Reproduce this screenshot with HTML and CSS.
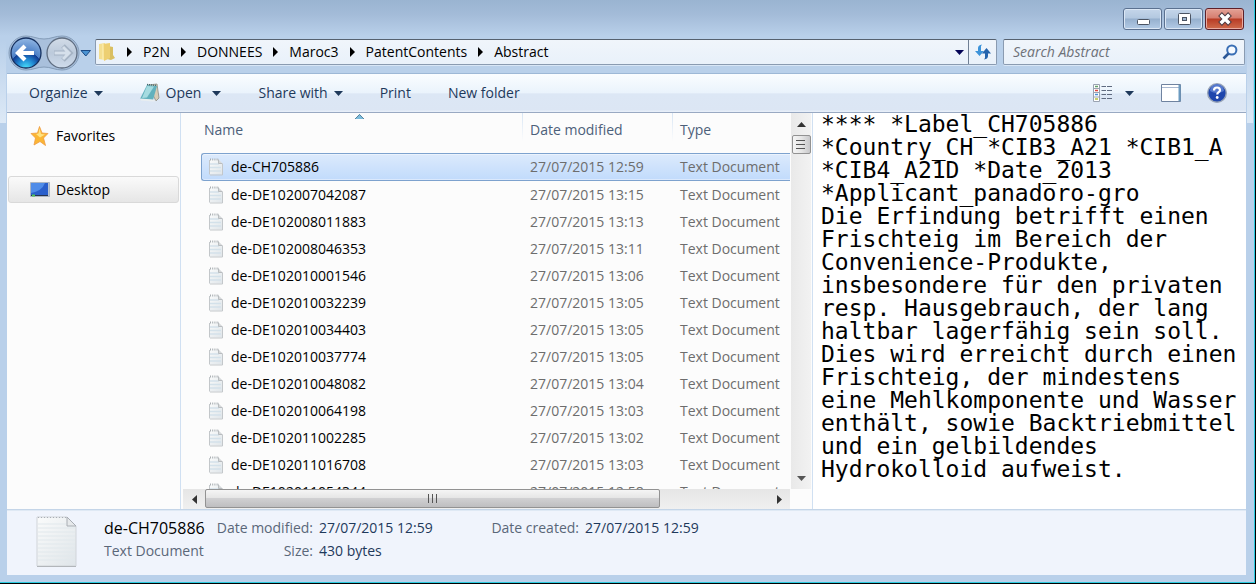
FILE: index.html
```html
<!DOCTYPE html>
<html lang="en">
<head>
<meta charset="utf-8">
<title>Abstract</title>
<link rel="stylesheet" href="styles.css">
</head>
<body>
<svg class="defs" aria-hidden="true">
  <defs>
    <linearGradient id="page" x1="0" y1="0" x2="1" y2="1"><stop offset="0" stop-color="#fafbfb"/><stop offset="1" stop-color="#dfe5e9"/></linearGradient>
    <symbol id="doc" viewBox="0 0 16 18">
      <path d="M1.5 1.5h9l4 4v11h-13z" fill="url(#page)"/>
      <path d="M2 6h9M2 9.5h11M2 13h11" stroke="#d3e1ea" stroke-width="1.6"/>
      <path d="M1.5 2v14.500M14.500 6v11M2 17h12.500" fill="none" stroke="#c3c7ca"/>
      <path d="M10.500 1.500v4h4" fill="#d5d8da" stroke="#aeb2b5" stroke-width=".8"/>
      <path d="M2 1.500h9" stroke="#a9aeb2" stroke-width="2" stroke-dasharray="1 1.200"/>
    </symbol>
    <symbol id="down" viewBox="0 0 9 5"><path d="M0 0h9L4.500 5z" fill="currentColor"/></symbol>
    <symbol id="crumb" viewBox="0 0 5 10"><path d="M0 0v10l5-5z"/></symbol>
  </defs>
</svg>
<div class="window">
  <header class="titlebar">
    <button class="caption" aria-label="Minimize"><svg width="16" height="16" viewBox="0 0 16 16"><rect x="2.500" y="8.500" width="12" height="5" rx="1" fill="#fff" stroke="#4b5463"/></svg></button>
    <button class="caption" aria-label="Maximize"><svg width="16" height="16" viewBox="0 0 16 16"><rect x="2.500" y="2.500" width="12" height="11" rx="1" fill="#fff" stroke="#4b5463"/><rect x="6.500" y="6.500" width="4" height="3" fill="#9db5d0" stroke="#4b5463"/></svg></button>
    <button class="caption close" aria-label="Close"><svg width="16" height="16" viewBox="0 0 16 16"><path d="M3 3l10 10M13 3L3 13" stroke="#4e3b42" stroke-width="5.400"/><path d="M3.700 3.700l8.600 8.600M12.300 3.700l-8.600 8.600" stroke="#fff" stroke-width="3.400"/></svg></button>
  </header>

  <nav class="navbar">
    <div class="travel">
      <svg class="plate" viewBox="0 0 84 36" aria-hidden="true">
        <defs>
          <radialGradient id="orb" cx=".5" cy="1" r="1"><stop offset="0" stop-color="#4be3fb"/><stop offset=".28" stop-color="#228bd4"/><stop offset=".52" stop-color="#113b91"/><stop offset=".54" stop-color="#4b7fc6"/><stop offset="1" stop-color="#93b8e4"/></radialGradient>
          <linearGradient id="orb2" x1="0" y1="0" x2="0" y2="1"><stop offset="0" stop-color="#d2dce8"/><stop offset=".5" stop-color="#bccadb"/><stop offset="1" stop-color="#cfdcec"/></linearGradient>
        </defs>
        <path d="M18 1c7 0 11 3 18 3s11-3 18-3a17 17 0 0 1 0 34c-7 0-11-3-18-3s-11 3-18 3a17 17 0 0 1 0-34z" fill="#a9c0dc" stroke="#849cb8"/>
        <circle cx="18" cy="18" r="15" fill="url(#orb)" stroke="#15305f" stroke-width="1.300"/>
        <path d="M10 18h16M17 11l-7 7 7 7" fill="none" stroke="#fff" stroke-width="4.200"/>
        <circle cx="54" cy="18" r="15" fill="url(#orb2)" stroke="#5f6d80" stroke-width="1.300"/>
        <path d="M46 18h16M55 11l7 7-7 7" fill="none" stroke="#a5b3c4" stroke-width="5"/>
        <path d="M46.500 18h14.500M55 12l6 6-6 6" fill="none" stroke="#d6e0eb" stroke-width="3"/>
        <path d="M73 15.500h9.500l-4.700 5.500z" fill="#4a93d2" stroke="#1b4a85"/>
      </svg>
      <button class="hit" aria-label="Back"></button>
      <button class="hit" aria-label="Forward"></button>
    </div>
    <div class="address">
      <svg class="folder" viewBox="0 0 18 20" aria-hidden="true"><path d="M10 4l5 1v8l2 3-4 2-4-1z" fill="#d9bf62"/><path d="M1 2l6-1v17l-6-1z" fill="#f4df91"/><path d="M5 2l7-1v15l-6 3z" fill="#edcf72"/><path d="M5 2v16" stroke="#fff1b8"/></svg>
      <svg class="arrow"><use href="#crumb"/></svg><a href="#">P2N</a>
      <svg class="arrow"><use href="#crumb"/></svg><a href="#">DONNEES</a>
      <svg class="arrow"><use href="#crumb"/></svg><a href="#">Maroc3</a>
      <svg class="arrow"><use href="#crumb"/></svg><a href="#">PatentContents</a>
      <svg class="arrow"><use href="#crumb"/></svg><a href="#">Abstract</a>
      <button class="history" aria-label="Previous locations"><svg class="down"><use href="#down"/></svg></button>
      <button class="refresh" aria-label="Refresh"><svg width="18" height="18" viewBox="0 0 18 18"><path d="M1 8h3V5q0-3 4-3.500Q6.500 3 7 5v3h3l-4.500 5z" fill="#3d93d9"/><path d="M8 10.500L12.500 5l4.500 5.500h-3V13q0 3-4 3.500 1.500-1.500 1-3.500v-2.500z" fill="#2363ad"/></svg></button>
    </div>
    <div class="search">
      <input type="text" placeholder="Search Abstract" aria-label="Search Abstract">
      <svg width="16" height="16" viewBox="0 0 16 16" aria-hidden="true"><circle cx="9.800" cy="6" r="4.600" fill="#f6faff" stroke="#3a6fb5" stroke-width="2"/><path d="M6.500 9.500L1.500 14.500" stroke="#2c5796" stroke-width="2.600"/></svg>
    </div>
  </nav>

  <div class="client">
    <div class="toolbar">
      <button>Organize <svg class="down"><use href="#down"/></svg></button>
      <button class="open"><svg class="notepad" viewBox="0 0 20 20" aria-hidden="true"><path d="M8 2l9-1 2 14-3 3z" fill="#d8ccb6" stroke="#8b8c82" stroke-width=".8"/><path d="M7 2l10 1-4 14-13-1z" fill="#62b1bd"/><path d="M7 3l7 .5-7 11-5 .5z" fill="#a5dbe0"/><path d="M0 15.500l13 1 3 1.500-3 .5-12-1z" fill="#e9eef0"/><path d="M7 1.500l10 1" stroke="#44686f" stroke-width="1.400" stroke-dasharray="1 1"/></svg>Open <svg class="down"><use href="#down"/></svg></button>
      <button>Share with <svg class="down"><use href="#down"/></svg></button>
      <button>Print</button>
      <button>New folder</button>
      <div class="views">
        <button aria-label="Change your view"><svg width="20" height="18" viewBox="0 0 20 18"><path d="M.5.500h6v17h-6zM.5 4.500h6M.5 8.500h6M.5 13h6" fill="#fff" stroke="#9aa3b1"/><path d="M2 2.500h3" stroke="#63a06a" stroke-width="1.500"/><path d="M2 6.500h3" stroke="#e2453d" stroke-width="1.500"/><path d="M2 10.500h3" stroke="#4b91d6" stroke-width="1.500"/><path d="M2 15h3" stroke="#b6c23c" stroke-width="1.500"/><path d="M8.500 2.500H13m1 0h5M8.500 6.500H13m1 0h5M8.500 10.500H13m1 0h5M8.500 14.500H13m1 0h5" stroke="#5f6b80"/></svg></button>
        <button class="more" aria-label="More options"><svg class="down"><use href="#down"/></svg></button>
        <button class="pane" aria-label="Hide the preview pane"><svg width="20" height="18" viewBox="0 0 20 18"><path d="M.5.500h19v17H.5z" fill="#fff" stroke="#6f83a0"/><path d="M1 3.500h17" stroke="#a9b8d0"/><path d="M18.500 1v16" stroke="#6b9ac0" stroke-width="2"/></svg></button>
        <button class="help" aria-label="Get help"><svg width="20" height="20" viewBox="0 0 20 20"><circle cx="10" cy="10" r="9.300" fill="#1e46ad" stroke="#98a4b7" stroke-width="1.400"/><path d="M3 8a7 7 0 0 1 14 0q-7 4-14 0z" fill="#5579ce"/><path d="M7 7.500q0-3 3-3t3 2.700c0 2-2.800 2-2.800 4.300" fill="none" stroke="#fff" stroke-width="2.200"/><circle cx="10.200" cy="14.500" r="1.400" fill="#fff"/></svg></button>
      </div>
    </div>

    <div class="panes">
      <aside class="sidebar">
        <a href="#"><svg class="side-icon" viewBox="0 0 20 20" aria-hidden="true"><path d="M9.500.5l2.500 6.500 6 .5-4.500 4.500 2 7.500-5.500-4-6 3.500 1.500-7L1 7.500 7.500 7z" fill="#fbb634" stroke="#ed9b41" stroke-width=".8"/><path d="M9.500 2l1.500 6 4 .5-5 3-4-3.500 2.500-.5z" fill="#ffe383"/></svg>Favorites</a>
        <a href="#" class="current"><svg class="side-icon" viewBox="0 0 20 20" aria-hidden="true"><path d="M.5 2.500h19v14H.5z" fill="#b8c4d3" stroke="#aab5c3"/><path d="M1 3h17v12H1z" fill="#2a5fcb"/><path d="M1 3h14q-3 8-14 10z" fill="#4f8ce8"/><path d="M1 15.500h17" stroke="#27344f"/><path d="M2 15.500h3" stroke="#4dc156" stroke-width="2"/></svg>Desktop</a>
      </aside>

      <section class="files">
        <div class="list">
          <svg class="sort" viewBox="0 0 9 5" aria-hidden="true"><path d="M0 5h9L4.500 0z" fill="#7cbcdc"/><path d="M0 5L4.500.500 9 5" fill="none" stroke="#43708c" stroke-width=".8"/></svg>
          <table>
            <thead><tr><th class="c-name">Name</th><th class="c-date">Date modified</th><th>Type</th></tr></thead>
            <tbody>
              <tr class="selected"><td><svg class="doc"><use href="#doc"/></svg>de-CH705886</td><td>27/07/2015 12:59</td><td>Text Document</td></tr>
              <tr><td><svg class="doc"><use href="#doc"/></svg>de-DE102007042087</td><td>27/07/2015 13:15</td><td>Text Document</td></tr>
              <tr><td><svg class="doc"><use href="#doc"/></svg>de-DE102008011883</td><td>27/07/2015 13:13</td><td>Text Document</td></tr>
              <tr><td><svg class="doc"><use href="#doc"/></svg>de-DE102008046353</td><td>27/07/2015 13:11</td><td>Text Document</td></tr>
              <tr><td><svg class="doc"><use href="#doc"/></svg>de-DE102010001546</td><td>27/07/2015 13:06</td><td>Text Document</td></tr>
              <tr><td><svg class="doc"><use href="#doc"/></svg>de-DE102010032239</td><td>27/07/2015 13:05</td><td>Text Document</td></tr>
              <tr><td><svg class="doc"><use href="#doc"/></svg>de-DE102010034403</td><td>27/07/2015 13:05</td><td>Text Document</td></tr>
              <tr><td><svg class="doc"><use href="#doc"/></svg>de-DE102010037774</td><td>27/07/2015 13:05</td><td>Text Document</td></tr>
              <tr><td><svg class="doc"><use href="#doc"/></svg>de-DE102010048082</td><td>27/07/2015 13:04</td><td>Text Document</td></tr>
              <tr><td><svg class="doc"><use href="#doc"/></svg>de-DE102010064198</td><td>27/07/2015 13:03</td><td>Text Document</td></tr>
              <tr><td><svg class="doc"><use href="#doc"/></svg>de-DE102011002285</td><td>27/07/2015 13:02</td><td>Text Document</td></tr>
              <tr><td><svg class="doc"><use href="#doc"/></svg>de-DE102011016708</td><td>27/07/2015 13:03</td><td>Text Document</td></tr>
              <tr><td><svg class="doc"><use href="#doc"/></svg>de-DE102011054344</td><td>27/07/2015 12:58</td><td>Text Document</td></tr>
            </tbody>
          </table>
        </div>
        <div class="vbar">
          <button aria-label="Scroll up"><svg width="9" height="5" viewBox="0 0 9 5"><path d="M0 5h9L4.500 0z" fill="#333"/></svg></button>
          <div class="vthumb"><svg width="10" height="11" viewBox="0 0 10 11"><path d="M0 1.500h9M0 5.500h9M0 9.500h9" stroke="#555"/></svg></div>
          <button class="end" aria-label="Scroll down"><svg width="9" height="5" viewBox="0 0 9 5"><path d="M0 0h9L4.500 5z" fill="#555"/></svg></button>
        </div>
        <div class="hbar">
          <button aria-label="Scroll left"><svg width="5" height="9" viewBox="0 0 5 9"><path d="M5 0v9L0 4.500z" fill="#333"/></svg></button>
          <div class="hthumb"><svg width="11" height="9" viewBox="0 0 11 9"><path d="M1.500 0v9M5.500 0v9M9.500 0v9" stroke="#555"/></svg></div>
          <button class="end" aria-label="Scroll right"><svg width="5" height="9" viewBox="0 0 5 9"><path d="M0 0v9l5-4.500z" fill="#333"/></svg></button>
        </div>
      </section>

      <section class="preview">**** *Label_CH705886
*Country_CH *CIB3_A21 *CIB1_A
*CIB4_A21D *Date_2013
*Applicant_panadoro-gro
Die Erfindung betrifft einen
Frischteig im Bereich der
Convenience-Produkte,
insbesondere für den privaten
resp. Hausgebrauch, der lang
haltbar lagerfähig sein soll.
Dies wird erreicht durch einen
Frischteig, der mindestens
eine Mehlkomponente und Wasser
enthält, sowie Backtriebmittel
und ein gelbildendes
Hydrokolloid aufweist.</section>
    </div>

    <footer class="details">
      <svg class="bigdoc" viewBox="0 0 42 52" aria-hidden="true"><path d="M1 1h30l9 9v40H1z" fill="url(#page)" stroke="#d0d4d9"/><path d="M2 8h28M2 12h37M2 16h37M2 20h37M2 24h37M2 28h37M2 32h37M2 36h37M2 40h37M2 44h37" stroke="#e1e8ec"/><path d="M31 1v9h9z" fill="#e6e9eb" stroke="#a8adb3"/><path d="M1 50.500h39" stroke="#b2b6ba"/><path d="M2 1.500h28" stroke="#a9aeb4" stroke-dasharray="1 2"/></svg>
      <div class="facts">
        <span class="name">de-CH705886</span><span class="label">Date modified:</span><span>27/07/2015 12:59</span><span class="label">Date created:</span><span>27/07/2015 12:59</span>
        <span class="kind">Text Document</span><span class="label">Size:</span><span>430 bytes</span>
      </div>
    </footer>
  </div>
</div>
</body>
</html>
```
FILE: styles.css
```css
* { box-sizing: border-box; }
body {
  margin: 0;
  font: 14px/20px "Open Sans", "Noto Sans", sans-serif;
  color: #000;
}
button {
  display: flex;
  align-items: center;
  justify-content: center;
  padding: 0;
  border: 0;
  background: none;
  font: inherit;
  color: inherit;
}
a { color: inherit; text-decoration: none; }
svg { display: block; flex: none; }
.defs { position: absolute; width: 0; height: 0; }
.down { width: 9px; height: 5px; }

.window {
  display: flex;
  flex-direction: column;
  height: 100vh;
  padding: 0 9px 8px 7px;
  border-right: 1px solid #000;
  border-bottom: 1px solid #000;
  box-shadow: inset -1px -1px #2ccbe0;
  background:
    linear-gradient(#b9d0ea00, #dde9f6) 0 40px / 6px 83px no-repeat,
    linear-gradient(#b9d0ea00, #dde9f6) calc(100% - 2px) 40px / 6px 83px no-repeat,
    linear-gradient(#9ab4d1, #a3bbd8 14px, #b9d0ea 36px);
}

.titlebar {
  display: flex;
  justify-content: flex-end;
  gap: 2px;
  flex: none;
  height: 38px;
  padding: 8px 2px 0 0;
}
.caption {
  width: 39px;
  height: 22px;
  border: 1px solid #5b7190;
  border-radius: 3px;
  box-shadow: inset 0 0 0 1px #dbe7f5;
  background: linear-gradient(#c5d6ea, #b3c8e0 45%, #96b0ce 50%, #b3cbe6);
}
.close {
  border-color: #5e2029;
  box-shadow: inset 0 0 0 1px #e9aaa0;
  background: linear-gradient(#e3a196, #d67d6f 45%, #b83b25 50%, #cf6c4d);
}

.navbar {
  display: flex;
  flex: none;
  height: 35px;
  padding-right: 1px;
}
.travel {
  display: flex;
  position: relative;
  flex: none;
  width: 88px;
  height: 35px;
}
.plate { position: absolute; left: 1px; top: -3px; width: 84px; height: 36px; }
.hit { width: 36px; height: 30px; position: relative; }
.address, .search {
  display: flex;
  align-items: center;
  height: 26px;
  margin-top: 1px;
  border: 1px solid #8a9bb1;
  border-top-color: #56616f;
  border-radius: 2px;
  box-shadow: 0 1px #d8e6f6;
  background: linear-gradient(#f0f5fb, #e9f1fa);
}
.address { flex: 1; gap: 11px; padding-left: 2px; }
.folder { width: 18px; height: 20px; }
.arrow { width: 5px; height: 10px; }
.history { width: 24px; margin-left: auto; color: #040456; }
.refresh { width: 28px; margin-left: -14px; height: 24px; border-left: 1px solid #6f7f94; }
.search { width: 242px; margin-left: 6px; padding: 0 6px 0 9px; }
.search input {
  flex: 1;
  min-width: 0;
  padding: 0;
  border: 0;
  background: none;
  font: italic 14px/20px "Open Sans", "Noto Sans", sans-serif;
}
.search input::placeholder { color: #6d7178; opacity: 1; }

.client { display: flex; flex-direction: column; flex: 1; min-height: 0; background: #fcfcfc; }
.toolbar {
  display: flex;
  align-items: center;
  gap: 37px;
  flex: none;
  height: 40px;
  padding: 0 19px 0 22px;
  border-top: 1px solid #9db8d6;
  border-bottom: 1px solid #99a9c2;
  background: linear-gradient(#fafdff, #eaf3fc 50%, #dce7f5 52%, #dce6f4 94%, #eaf1fa);
  color: #1e395b;
}
.toolbar button { gap: 6px; }
.toolbar .open .down { margin-left: 5px; }
.notepad { width: 20px; height: 20px; }
.views { display: flex; align-items: center; margin-left: auto; }
.toolbar .more { margin-left: 12px; }
.toolbar .pane { margin-left: 27px; }
.toolbar .help { margin-left: 26px; }

.panes { display: flex; flex: 1; min-height: 0; }
.sidebar {
  flex: none;
  width: 174px;
  padding: 9px 1px 0 1px;
  border-right: 1px solid #d0e0f2;
}
.sidebar a {
  display: flex;
  align-items: center;
  gap: 6px;
  height: 27px;
  margin-bottom: 27px;
  padding-left: 21px;
  border: 1px solid transparent;
}
.sidebar .current {
  border-color: #d9d9d9;
  border-radius: 3px;
  background: linear-gradient(#fafafa, #e6e6e6);
}
.side-icon { width: 20px; height: 20px; }

.files {
  display: grid;
  grid-template-columns: minmax(0, 1fr) 20px;
  grid-template-rows: minmax(0, 1fr) 20px;
  flex: 1;
  min-width: 0;
  padding: 0 1px 0 2px;
}
.list { position: relative; overflow: hidden; padding-left: 18px; margin-right: 1px; }
.sort { position: absolute; left: 172px; top: 1px; width: 9px; height: 5px; }
table { width: 100%; table-layout: fixed; border-spacing: 0; text-align: left; }
th {
  height: 40px;
  padding: 0 0 6px 8px;
  background: linear-gradient(#d7e5f4, #d7e5f400) 0 0 / 1px 28px no-repeat;
  font-weight: 400;
  color: #4c607a;
}
.c-name { width: 321px; padding-left: 3px; background: none; }
.c-date { width: 150px; }
td { height: 27px; padding: 0 0 0 8px; white-space: nowrap; color: #6d6d6d; }
td:first-child { padding-left: 30px; color: #000; }
.doc { float: left; width: 16px; height: 18px; margin: 1px 7px 0 -23px; }
.selected td {
  height: 28px;
  border: solid #7da2ce;
  border-width: 1px 0;
  box-shadow: inset 0 1px #ebf3fd, inset 0 -1px #dbe9fd;
  background: linear-gradient(#dceafc, #c1dbfc);
}
.selected td:first-child { border-left-width: 1px; border-radius: 3px 0 0 3px; padding-left: 29px; }

.vbar, .hbar { display: flex; background: linear-gradient(90deg, #e9e9e9, #f2f2f2); }
.vbar { flex-direction: column; align-items: center; }
.hbar { margin-right: 1px; background: linear-gradient(#e6e6e6, #f0f0f0); }
.vbar button { height: 22px; width: 20px; }
.hbar button { width: 22px; }
.vbar .end { margin-top: auto; }
.hbar .end { margin-left: auto; }
.vthumb, .hthumb {
  display: flex;
  align-items: center;
  justify-content: center;
  border: 1px solid #929292;
  border-radius: 2px;
}
.vthumb { width: 19px; height: 19px; background: linear-gradient(90deg, #f5f5f5, #e6e6e6 50%, #c8c8ca); }
.hthumb { width: 75%; height: 19px; background: linear-gradient(#f5f5f5, #e6e6e6 45%, #d0d0d2 50%, #bebec0); }

.preview {
  flex: none;
  width: 434px;
  padding: 0 0 0 8px;
  overflow: hidden;
  border-left: 1px solid #d0e0f2;
  background: #fff;
  font: 23px/23px "DejaVu Sans Mono", monospace;
  white-space: pre-wrap;
}

.details {
  display: flex;
  flex: none;
  height: 66px;
  padding: 6px 0 0 29px;
  border-top: 1px solid #c4d5e8;
  box-shadow: inset 0 1px #dfe9f4;
  background: #f0f4fc;
  color: #1e395b;
}
.bigdoc { width: 42px; height: 52px; }
.facts {
  display: grid;
  grid-template-columns: 103px 100px 115px 139px auto;
  grid-auto-rows: 23px;
  align-content: start;
  align-items: center;
  column-gap: 6px;
  margin-left: 26px;
}
.name { font-size: 16px; color: #000; }
.label, .kind { color: #5a6779; }
.label { text-align: right; }
```
